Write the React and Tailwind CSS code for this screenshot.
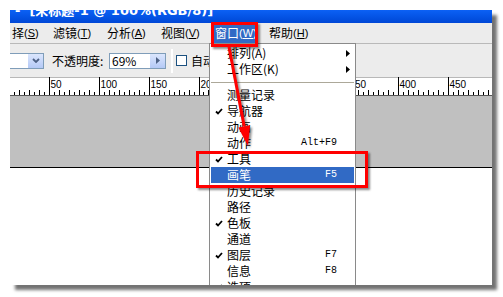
import React from 'react';

const menuBar = [
  { label: '择', key: 'S', cls: 'w-[39px] pl-[2px]' },
  { label: '滤镜', key: 'T', cls: 'w-[54px] pl-[4px]' },
  { label: '分析', key: 'A', cls: 'w-[54px] pl-[4px]' },
  { label: '视图', key: 'V', cls: 'w-[54px] pl-[4px]' },
  { label: '窗口', key: 'W', cls: 'w-[46px] pl-[4px] mr-[8px] bg-[#316ac5] text-white' },
  { label: '帮助', key: 'H', cls: 'w-[54px] pl-[4px]' },
];

const windowItems = [
  { label: '测量记录' },
  { label: '导航器', checked: true },
  { label: '动画' },
  { label: '动作', shortcut: 'Alt+F9' },
  { label: '工具', checked: true },
  { label: '画笔', shortcut: 'F5', active: true },
  { label: '历史记录' },
  { label: '路径' },
  { label: '色板', checked: true },
  { label: '通道' },
  { label: '图层', checked: true, shortcut: 'F7' },
  { label: '信息', shortcut: 'F8' },
  { label: '选项', checked: true },
];

const Check = ({ white }) => (
  <svg width="8" height="7" viewBox="0 0 8 7">
    <polyline points="1,3.5 3,5.5 7,1" fill="none" stroke={white ? '#fff' : '#000'} strokeWidth="1.8" />
  </svg>
);

const Arrow = () => (
  <svg width="4" height="7" viewBox="0 0 4 7">
    <polygon points="0,0 4,3.5 0,7" fill="#000" />
  </svg>
);

const Ruler = () => {
  const ticks = [];
  for (let n = 5; n <= 500; n += 5) {
    const x = Math.round(n - 1 - n / 400) - 10 + 0.5;
    if (x > 482) break;
    let y1 = 15;
    if (n % 50 === 0) y1 = 0;
    else if (n % 10 === 0) y1 = 13;
    ticks.push(<line key={n} x1={x} y1={y1} x2={x} y2={18} stroke="#000" strokeWidth="1" />);
    // 250 and 300 sit under the open menu
    if (n % 50 === 0 && n !== 250 && n !== 300) {
      ticks.push(
        <text key={'t' + n} x={x + 1} y={11} fontSize="10" fontFamily="Liberation Sans, sans-serif" fill="#000">
          {n}
        </text>
      );
    }
  }
  return (
    <svg width="482" height="19" className="block bg-white">
      <line x1="0" y1="0.5" x2="482" y2="0.5" stroke="#b8b8b8" />
      {ticks}
      <line x1="0" y1="18.5" x2="482" y2="18.5" stroke="#555" />
    </svg>
  );
};

export default function App() {
  return (
    <div className="w-[503px] h-[297px] bg-white pt-[10px] pl-[10px] font-[family-name:'Noto_Sans_CJK_SC','Liberation_Sans',sans-serif] text-black">
      <div className="relative w-[482px] h-[275px] overflow-hidden bg-white flex flex-col shadow-[5px_5px_3px_rgba(0,0,0,0.55)]">
        {/* title bar */}
        <div className="h-[13px] shrink-0 overflow-hidden bg-gradient-to-b from-[#0c61f5] to-[#0047d6] text-white font-bold text-[13px] leading-[13px] whitespace-nowrap">
          <div className="-mt-[6px] flex font-[family-name:'DejaVu_Sans','Noto_Sans_CJK_SC',sans-serif]">
            <span className="ml-[5px]">-</span>
            <span className="ml-[9px]">[未标题-1 @ 100%(RGB/8)]</span>
          </div>
        </div>

        {/* menu bar */}
        <div className="h-[21px] shrink-0 flex bg-[#ececec] border-b border-[#b9b9b9] text-[12px] leading-[20px]">
          {menuBar.map((m) => (
            <div key={m.key} className={`flex items-center whitespace-nowrap ${m.cls}`}>
              {m.label}
              <span className="font-[family-name:'Liberation_Sans',sans-serif] text-[11px]">
                (<span className="underline">{m.key}</span>)
              </span>
            </div>
          ))}
        </div>

        {/* options bar */}
        <div className="h-[33px] shrink-0 flex items-center bg-[#ececec] text-[12px]">
          <div className="w-[34px] h-[16px] flex bg-white border-y border-r border-[#7f9db9]">
            <div className="flex-1" />
            <div className="w-[15px] h-full flex items-center justify-center bg-gradient-to-b from-[#dbe6fd] to-[#b4c9f6]">
              <svg width="8" height="5" viewBox="0 0 8 5">
                <polyline points="1,1 4,4 7,1" fill="none" stroke="#4d6185" strokeWidth="1.8" />
              </svg>
            </div>
          </div>
          <span className="ml-[8px] w-[57px] whitespace-nowrap">不透明度:</span>
          <div className="w-[57px] h-[16px] flex items-center bg-white border border-[#7f9db9]">
            <span className="flex-1 pl-[2px] leading-[14px]">69%</span>
            <div className="w-[15px] h-full flex items-center justify-center bg-gradient-to-b from-[#dbe6fd] to-[#b4c9f6]">
              <svg width="4" height="7" viewBox="0 0 4 7">
                <polygon points="0,0 4,3.5 0,7" fill="#4d6185" />
              </svg>
            </div>
          </div>
          <div className="ml-[5px] w-[2px] h-[24px] border-l border-[#a6a6a6] border-r border-white" />
          <div className="ml-[3px] w-[11px] h-[11px] border border-[#1c5180] bg-white" />
          <span className="ml-[4px] whitespace-nowrap">自动</span>
        </div>

        {/* ruler */}
        <div className="h-[19px] shrink-0">
          <Ruler />
        </div>

        {/* canvas */}
        <div className="h-[72px] shrink-0 bg-[#c0c0c0] border-b border-black" />
        <div className="flex-1 bg-white" />

        {/* window menu */}
        <div className="absolute left-[199px] top-[33px] w-[147px] bg-white border border-[#8a8a8a] p-[1px] text-[12px] leading-[16px]">
          <div className="h-[16px] flex items-center pl-[16px] pr-[4px]">
            <span>排列(A)</span>
            <span className="ml-auto"><Arrow /></span>
          </div>
          <div className="h-[16px] flex items-center pl-[16px] pr-[4px]">
            <span>工作区(K)</span>
            <span className="ml-auto"><Arrow /></span>
          </div>
          <div className="h-[10px] flex items-center">
            <div className="w-full h-px bg-[#aca899]" />
          </div>
          {windowItems.map((it) => (
            <div
              key={it.label}
              className={`h-[16px] flex items-center pr-[17px] ${it.active ? 'bg-[#316ac5] text-white' : ''}`}
            >
              <div className="w-[16px] pl-[4px] flex items-center">{it.checked && <Check white={it.active} />}</div>
              <span>{it.label}</span>
              {it.shortcut && (
                <span className="ml-auto font-[family-name:'Liberation_Mono',monospace] text-[10px]">{it.shortcut}</span>
              )}
            </div>
          ))}
        </div>

        {/* annotations */}
        <div className="absolute left-[201px] top-[12px] w-[47px] h-[25px] border-[3px] border-[#ff0000] shadow-[2px_2px_2px_rgba(0,0,0,0.45)]" />
        <div className="absolute left-[186px] top-[141px] w-[172px] h-[37px] border-[3px] border-[#ff0000] shadow-[2px_2px_2px_rgba(0,0,0,0.45)]" />
        <svg className="absolute left-0 top-0 pointer-events-none drop-shadow-[2px_2px_1px_rgba(0,0,0,0.45)]" width="482" height="275">
          <line x1="219" y1="37" x2="234.2" y2="116.4" stroke="#ff0000" strokeWidth="3" />
          <polygon points="238,136 240.1,115.3 228.3,117.5" fill="#ff0000" />
        </svg>
      </div>
    </div>
  );
}
